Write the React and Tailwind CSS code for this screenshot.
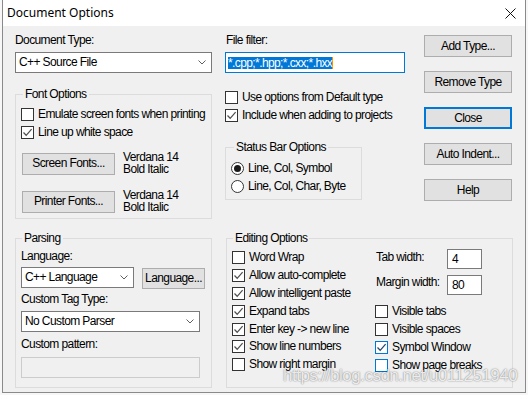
import React from "react";

function CheckBox({ checked, blue }) {
  return (
    <span
      className={
        blue
          ? "w-[13px] h-[13px] border border-[#0078d7] bg-white flex items-center justify-center shrink-0"
          : "w-[13px] h-[13px] border border-[#333333] bg-white flex items-center justify-center shrink-0"
      }
    >
      {checked && (
        <svg width="11" height="11" viewBox="0 0 11 11">
          <path
            d="M1.5 5.5 L4.2 8.3 L9.6 2.2"
            fill="none"
            stroke={blue ? "#27466b" : "#505050"}
            strokeWidth="1.25"
          />
        </svg>
      )}
    </span>
  );
}

function Check({ checked, blue, label, tight }) {
  return (
    <div
      className={
        tight
          ? "flex items-center h-[17.8px] gap-[4px] whitespace-nowrap"
          : "flex items-center h-[18px] gap-[4px] whitespace-nowrap"
      }
    >
      <CheckBox checked={checked} blue={blue} />
      <span>{label}</span>
    </div>
  );
}

function Radio({ selected, label }) {
  return (
    <div className="flex items-center h-[18px] gap-[4px] whitespace-nowrap">
      <span className="w-[13px] h-[13px] rounded-full border border-[#333333] bg-white flex items-center justify-center shrink-0">
        {selected && <span className="w-[7px] h-[7px] rounded-full bg-[#1a1a1a]" />}
      </span>
      <span>{label}</span>
    </div>
  );
}

function Chevron() {
  return (
    <svg width="8" height="5" viewBox="0 0 8 5" className="shrink-0">
      <path d="M0.5 0.5 L4 4 L7.5 0.5" fill="none" stroke="#606060" strokeWidth="1" />
    </svg>
  );
}

function Select({ text, w }) {
  return (
    <div className={`${w} h-[21px] border border-[#7a7a7a] bg-white flex items-center justify-between pl-[3px] pr-[5px]`}>
      <span className="whitespace-nowrap">{text}</span>
      <Chevron />
    </div>
  );
}

function Btn({ children, w = "w-[88px]", focused }) {
  return (
    <button
      className={
        focused
          ? `${w} h-[22px] border-2 border-[#0078d7] bg-[#e1e1e1] flex items-center justify-center whitespace-nowrap`
          : `${w} h-[22px] border border-[#adadad] bg-[#e1e1e1] flex items-center justify-center whitespace-nowrap`
      }
    >
      {children}
    </button>
  );
}

function Group({ title, className, children, legendMl = "ml-[7px]" }) {
  return (
    <fieldset className={`border border-[#dcdcdc] ${className}`}>
      <legend className={`${legendMl} px-[2px] leading-[14px] h-[14px]`}>{title}</legend>
      {children}
    </fieldset>
  );
}

export default function App() {
  return (
    <div className="w-[528px] h-[395px] bg-[#f7f7f7] overflow-hidden font-['Liberation_Sans',Arial,sans-serif] text-[12px] tracking-[-0.6px] text-black leading-[15px]">
      <div className="ml-[2px] w-[524px] h-[393px] border-x border-b border-[#8a8a8a] bg-[#f0f0f0] flex flex-col relative">
        {/* Title bar */}
        <div className="h-[26px] bg-white flex items-center justify-between pl-[4px] pr-[9px] shrink-0">
          <span className="font-['Noto_Sans',sans-serif] text-[12px] tracking-normal leading-[16px]">Document Options</span>
          <svg width="11" height="11" viewBox="0 0 11 11">
            <path d="M0.5 0.5 L10.5 10.5 M10.5 0.5 L0.5 10.5" stroke="#111" strokeWidth="1" fill="none" />
          </svg>
        </div>

        {/* Top section */}
        <div className="flex pl-[12px] pt-[7px]">
          {/* Column A */}
          <div className="w-[197px] flex flex-col">
            <div className="h-[15px]">Document Type:</div>
            <div className="mt-[4px]">
              <Select text="C++ Source File" w="w-[197px]" />
            </div>
            <Group title="Font Options" className="mt-[14px] h-[132px]" legendMl="ml-[7px]">
              <div className="pl-[5px] pt-[4px]">
                <Check label="Emulate screen fonts when printing" />
                <Check checked label="Line up white space" />
                <div className="flex items-center mt-[10px] pl-[1px]">
                  <Btn w="w-[93px]">Screen Fonts...</Btn>
                  <div className="ml-[8px] leading-[12px] pb-[1px]">
                    <div>Verdana 14</div>
                    <div>Bold Italic</div>
                  </div>
                </div>
                <div className="flex items-center mt-[13px] pl-[1px]">
                  <Btn w="w-[93px]">Printer Fonts...</Btn>
                  <div className="ml-[8px] leading-[12px] pb-[1px]">
                    <div>Verdana 14</div>
                    <div>Bold Italic</div>
                  </div>
                </div>
              </div>
            </Group>
          </div>

          {/* Column B */}
          <div className="w-[180px] ml-[13px] flex flex-col">
            <div className="h-[15px] pl-[1px]">File filter:</div>
            <div className="mt-[4px] h-[21px] border border-[#0078d7] bg-white flex items-center pl-[2px]">
              <span className="bg-[#0078d7] text-white leading-[12px] h-[12px] whitespace-nowrap border-r border-[#ff8c00]">
                *.cpp;*.hpp;*.cxx;*.hxx
              </span>
            </div>
            <div className="mt-[15px]">
              <Check label="Use options from Default type" />
              <Check checked label="Include when adding to projects" />
            </div>
            <Group title="Status Bar Options" className="mt-[16px] w-[137px] h-[60px]" legendMl="ml-[8px]">
              <div className="pl-[5px] pt-[5px]">
                <Radio selected label="Line, Col, Symbol" />
                <Radio label="Line, Col, Char, Byte" />
              </div>
            </Group>
          </div>

          {/* Column C */}
          <div className="ml-[19px] mt-[2px] flex flex-col gap-[14px]">
            <Btn>Add Type...</Btn>
            <Btn>Remove Type</Btn>
            <Btn focused>Close</Btn>
            <Btn>Auto Indent...</Btn>
            <Btn>Help</Btn>
          </div>
        </div>

        {/* Bottom section */}
        <div className="flex pl-[12px] mt-[12px]">
          <Group title="Parsing" className="w-[197px] h-[157px]" legendMl="ml-[6px]">
            <div className="pl-[5px] flex flex-col">
              <div className="mt-[4px] h-[15px]">Language:</div>
              <div className="mt-[3px] flex items-start gap-[8px]">
                <Select text="C++ Language" w="w-[113px]" />
                <button className="mt-[1px] w-[63px] h-[21px] border border-[#adadad] bg-[#e1e1e1] flex items-center justify-center">
                  Language...
                </button>
              </div>
              <div className="mt-[3px] h-[15px]">Custom Tag Type:</div>
              <div className="mt-[4px]">
                <Select text="No Custom Parser" w="w-[179px]" />
              </div>
              <div className="mt-[5px] h-[15px]">Custom pattern:</div>
              <div className="mt-[5px] w-[179px] h-[21px] border border-[#cccccc] bg-[#f0f0f0]" />
            </div>
          </Group>

          <Group title="Editing Options" className="ml-[14px] w-[287px] h-[157px]" legendMl="ml-[6px]">
            <div className="pl-[5px] pt-[4px] flex">
              <div className="w-[143px] flex flex-col">
                <Check tight label="Word Wrap" />
                <Check tight checked label="Allow auto-complete" />
                <Check tight checked label="Allow intelligent paste" />
                <Check tight checked label="Expand tabs" />
                <Check tight checked label="Enter key -> new line" />
                <Check tight checked label="Show line numbers" />
                <Check tight label="Show right margin" />
              </div>
              <div className="flex flex-col">
                <div className="flex items-start">
                  <div className="w-[72px] pl-[1px] mt-[1px] h-[15px] whitespace-nowrap">Tab width:</div>
                  <div className="w-[35px] h-[20px] border border-[#7a7a7a] bg-white pl-[4px] flex items-center">4</div>
                </div>
                <div className="flex items-start mt-[6px]">
                  <div className="w-[72px] pl-[1px] h-[15px] whitespace-nowrap">Margin width:</div>
                  <div className="w-[35px] h-[20px] border border-[#7a7a7a] bg-white pl-[4px] flex items-center">80</div>
                </div>
                <div className="mt-[7px]">
                  <Check label="Visible tabs" />
                  <Check label="Visible spaces" />
                  <Check checked blue label="Symbol Window" />
                  <Check blue label="Show page breaks" />
                </div>
              </div>
            </div>
          </Group>
        </div>

        {/* Watermark overlay */}
        <div className="absolute left-[280px] top-[366px] font-['Liberation_Sans',sans-serif] text-[17px] leading-[20px] tracking-[-0.5px] text-[rgba(255,255,255,0.85)] [text-shadow:0_0_1.5px_rgba(0,0,0,0.6)] whitespace-nowrap pointer-events-none">
          https://blog.csdn.net/u011251940
        </div>
      </div>
    </div>
  );
}
